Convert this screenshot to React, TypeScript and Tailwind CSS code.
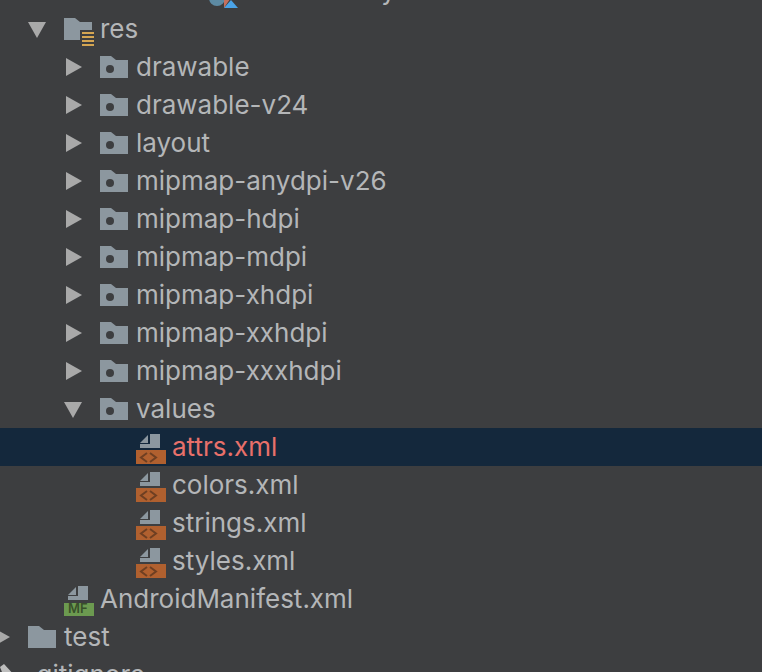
import React from 'react';

const RightArrow = () => (
  <svg width="18" height="18" viewBox="0 0 18 18" className="block">
    <path d="M2 0 L18 9 L2 18 Z" fill="#a9a9a9" />
  </svg>
);

const DownArrow = () => (
  <svg width="18" height="18" viewBox="0 0 18 18" className="block">
    <path d="M0 2 L18 2 L9 18 Z" fill="#a9a9a9" />
  </svg>
);

const ResFolderIcon = () => (
  <svg width="32" height="34" viewBox="0 0 32 34" className="block">
    <path d="M0 6 H11 L16 10 H28 V28 H0 Z" fill="#8c979f" />
    <rect x="16" y="18" width="16" height="16" fill="#3d3e40" />
    <rect x="18" y="20" width="12" height="2" fill="#d4a552" />
    <rect x="18" y="24" width="12" height="2" fill="#d4a552" />
    <rect x="18" y="28" width="12" height="2" fill="#d4a552" />
    <rect x="18" y="32" width="12" height="2" fill="#d4a552" />
  </svg>
);

const PackageIcon = () => (
  <svg width="28" height="22" viewBox="0 0 28 22" className="block">
    <path d="M0 0 H11 L16 4 H28 V22 H0 Z" fill="#8c979f" />
    <circle cx="10" cy="13" r="4" fill="#3d3e40" />
  </svg>
);

const PlainFolderIcon = () => (
  <svg width="28" height="22" viewBox="0 0 28 22" className="block">
    <path d="M0 0 H11 L16 4 H28 V22 H0 Z" fill="#8c979f" />
  </svg>
);

const DocShape = () => (
  <path d="M14 5 H24 V19 H4 V15 H14 Z M4 14 L12 6 V14 Z" fill="#8c979f" />
);

const XmlIcon = () => (
  <svg width="30" height="36" viewBox="0 0 30 36" className="block">
    <DocShape />
    <rect x="0" y="21" width="30" height="14" fill="#b0602f" />
    <path d="M11 24 L5 28.5 L11 33 M14 24 L20 28.5 L14 33" fill="none" stroke="#6e3f22" strokeWidth="2" />
  </svg>
);

const ManifestIcon = () => (
  <svg width="30" height="36" viewBox="0 0 30 36" className="block">
    <DocShape />
    <rect x="0" y="22" width="30" height="13" fill="#6c9a50" />
    <text x="4" y="32" fontSize="13" fontWeight="600" fill="#38502a" fontFamily="Inter, sans-serif">MF</text>
  </svg>
);

// only the bottom edge shows at the top of the picture
const KotlinClassIcon = () => (
  <svg width="30" height="36" viewBox="0 0 30 36" className="block">
    <circle cx="9" cy="25" r="8" fill="#5d8aa3" />
    <path d="M16 23 H24 L16 35 Z" fill="#c4705e" />
    <path d="M23 27 L16 35 H30 Z" fill="#4aa3e8" />
  </svg>
);

// cut off by the bottom of the picture
const IgnoreIcon = () => (
  <svg width="22" height="30" viewBox="0 0 22 30" className="block">
    <path d="M7 7 L11 4 L23 17 L23 30 L16 30 Z" fill="#bdbdbd" />
  </svg>
);

type RowProps = {
  indent: string;
  arrow?: 'right' | 'down';
  icon: React.ReactNode;
  label: string;
  selected?: boolean;
};

const Row: React.FC<RowProps> = ({ indent, arrow, icon, label, selected }) => (
  <div className={`flex h-[38px] items-center ${indent} ${selected ? 'bg-[#14283c]' : ''}`}>
    {arrow && (
      <span className="flex w-[36px] shrink-0 items-center">
        {arrow === 'right' ? <RightArrow /> : <DownArrow />}
      </span>
    )}
    <span className="flex w-[36px] shrink-0 items-center">{icon}</span>
    <span className={`whitespace-nowrap text-[26px] leading-[38px] ${selected ? 'text-[#e8706a]' : 'text-[#b4b6b8]'}`}>
      {label}
    </span>
  </div>
);

const folders = [
  'drawable',
  'drawable-v24',
  'layout',
  'mipmap-anydpi-v26',
  'mipmap-hdpi',
  'mipmap-mdpi',
  'mipmap-xhdpi',
  'mipmap-xxhdpi',
  'mipmap-xxxhdpi',
];

export default function App() {
  return (
    <div className="h-[672px] w-[762px] overflow-hidden bg-[#3d3e40] font-['Inter',sans-serif]">
      <div className="-mt-[28px]">
        <Row indent="pl-[208px]" icon={<KotlinClassIcon />} label="MainActivity" />
        <Row indent="pl-[28px]" arrow="down" icon={<ResFolderIcon />} label="res" />
        {folders.map((name) => (
          <Row key={name} indent="pl-[64px]" arrow="right" icon={<PackageIcon />} label={name} />
        ))}
        <Row indent="pl-[64px]" arrow="down" icon={<PackageIcon />} label="values" />
        <Row indent="pl-[136px]" icon={<XmlIcon />} label="attrs.xml" selected />
        <Row indent="pl-[136px]" icon={<XmlIcon />} label="colors.xml" />
        <Row indent="pl-[136px]" icon={<XmlIcon />} label="strings.xml" />
        <Row indent="pl-[136px]" icon={<XmlIcon />} label="styles.xml" />
        <Row indent="pl-[64px]" icon={<ManifestIcon />} label="AndroidManifest.xml" />
        <Row indent="-ml-[8px]" arrow="right" icon={<PlainFolderIcon />} label="test" />
        <Row indent="-ml-[7px]" icon={<IgnoreIcon />} label=".gitignore" />
      </div>
    </div>
  );
}
